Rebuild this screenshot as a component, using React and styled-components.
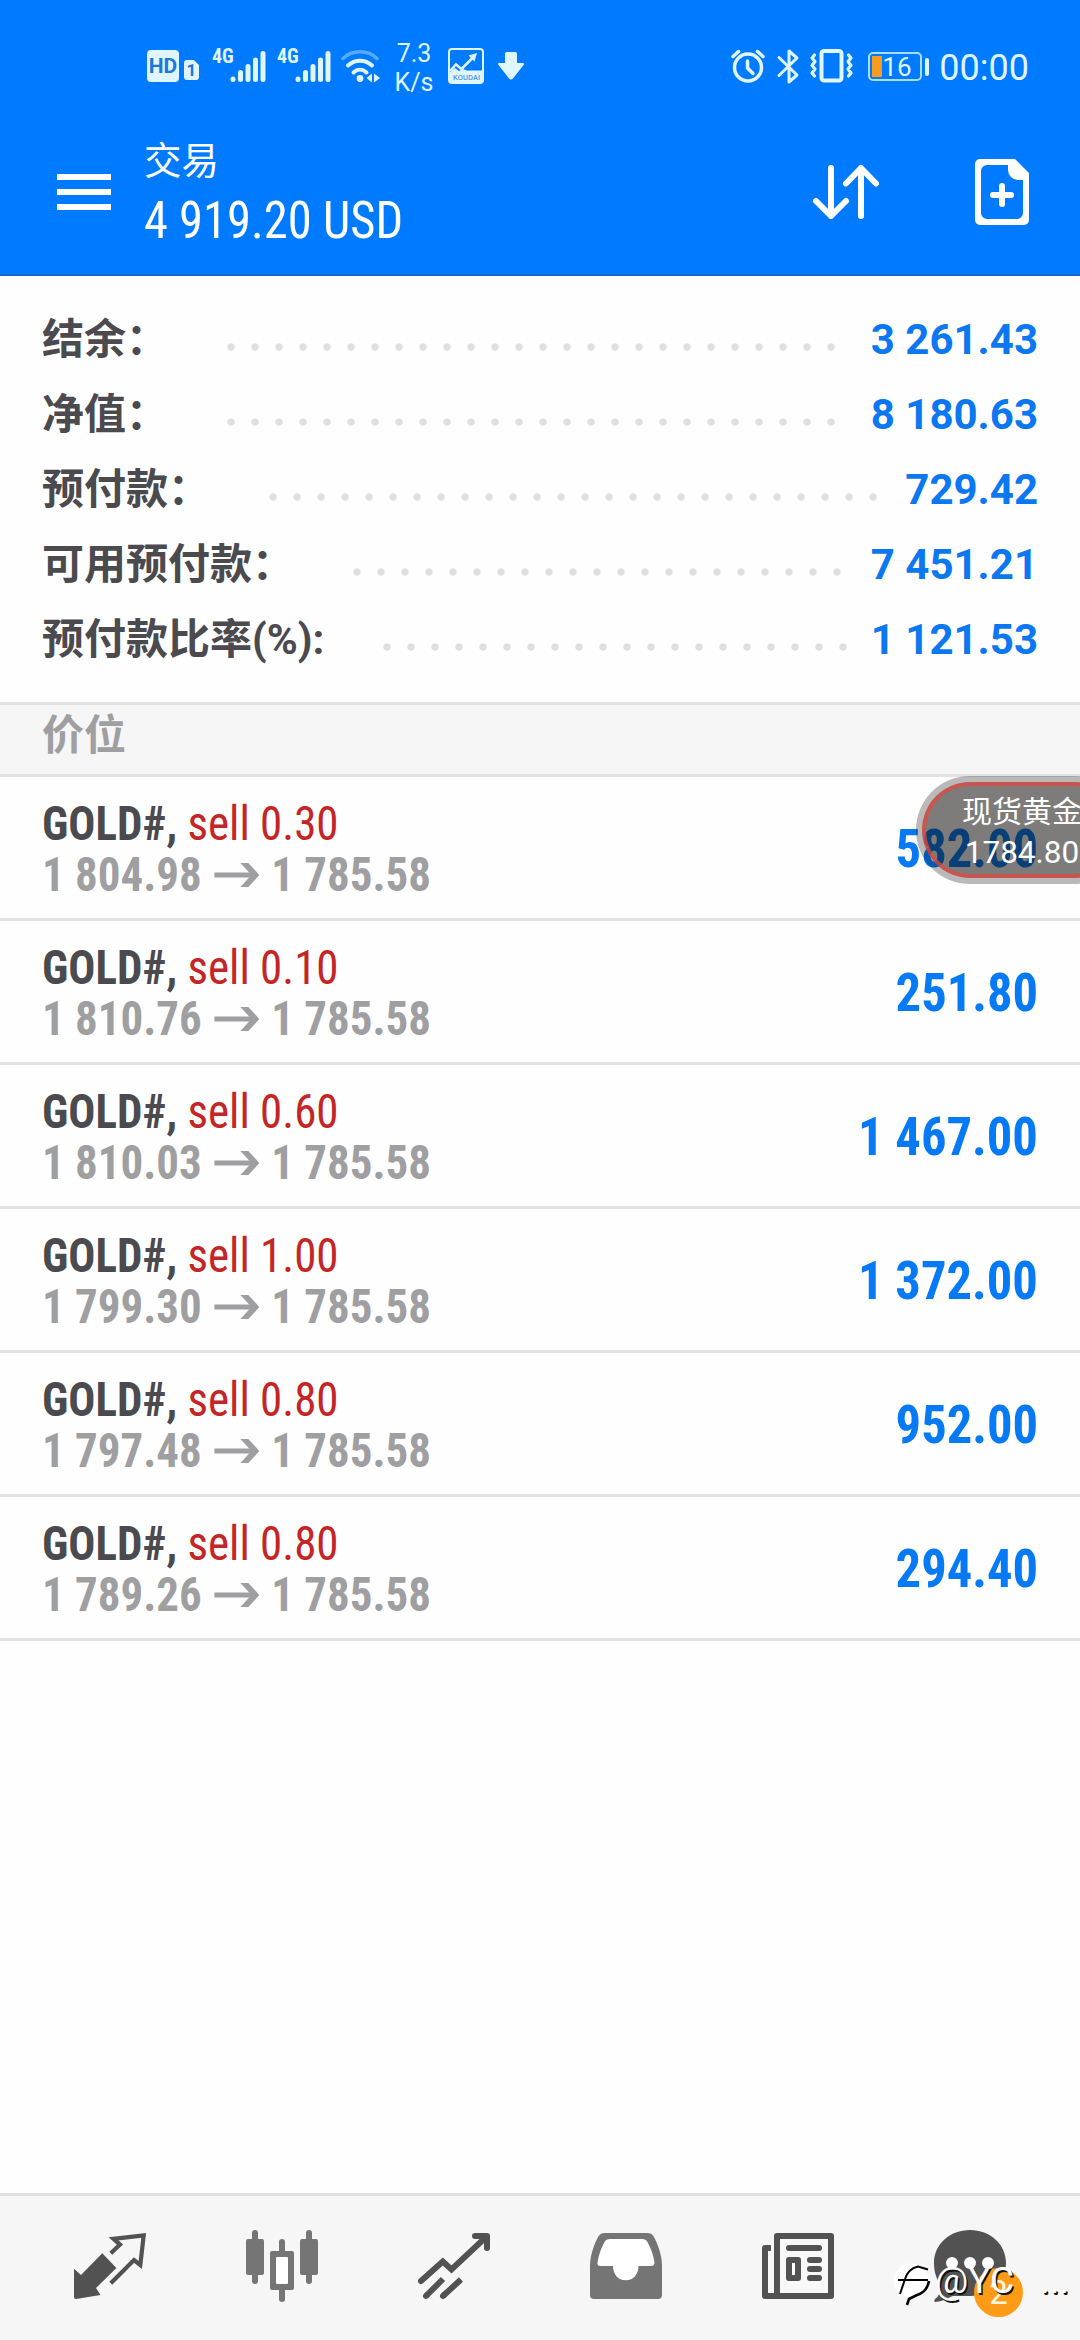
import styled, { createGlobalStyle } from 'styled-components';

const GlobalStyle = createGlobalStyle`
  body {
    margin: 0;
    background: #fff;
    font-family: Roboto, 'Noto Sans CJK SC', sans-serif;
  }
`;

const condensed = `
  font-family: 'Roboto Condensed', Roboto, 'Noto Sans CJK SC', sans-serif;
  font-stretch: 75%;
`;

const Screen = styled.div`
  position: relative;
  display: flex;
  flex-direction: column;
  width: 1080px;
  height: 2340px;
  overflow: hidden;
  background: #fefefe;
`;

const Header = styled.header`
  box-sizing: border-box;
  height: 276px;
  background: #007aff;
  border-bottom: 2px solid #1467c4;
`;

const StatusBar = styled.div`
  display: flex;
  align-items: center;
  justify-content: space-between;
  height: 132px;
  padding: 0 51px 0 147px;
  color: #dff6ff;
`;

const StatusGroup = styled.div`
  display: flex;
  align-items: center;
`;

const Icon = styled.svg`
  display: block;
  flex: none;
  overflow: visible;
  margin-left: ${props => props.$gap || 0}px;
`;

const HdBadge = styled.div`
  width: 32px;
  height: 32px;
  border-radius: 4px;
  background: #dff6ff;
  color: #1d78d8;
  font-size: 21px;
  font-weight: 700;
  line-height: 32px;
  text-align: center;
`;

const SimBadge = styled.div`
  width: 15px;
  height: 20px;
  margin: 8px 0 0 5px;
  border-radius: 3px;
  background: #dff6ff;
  clip-path: polygon(0 0, 65% 0, 100% 25%, 100% 100%, 0 100%);
  color: #1d78d8;
  font-size: 17px;
  font-weight: 700;
  line-height: 21px;
  text-align: center;
`;

const NetworkType = styled.span`
  ${condensed}
  width: 18px;
  margin: -20px 0 0 ${props => props.$gap}px;
  font-size: 20px;
  font-weight: 700;
  line-height: 20px;
`;

const Speed = styled.div`
  width: 40px;
  margin-left: 14px;
  font-size: 25px;
  line-height: 29px;
  text-align: center;
  padding-top: 3px;
`;

const Battery = styled.div`
  display: flex;
  align-items: center;
  margin-left: 15px;
  padding-top: 1px;

  &::after {
    content: '';
    width: 4px;
    height: 18px;
    margin-left: 3px;
    border-radius: 2px;
    background: #dff6ff;
  }
`;

const BatteryBody = styled.div`
  box-sizing: border-box;
  display: flex;
  align-items: center;
  width: 54px;
  height: 29px;
  padding-left: 2px;
  border: 2px solid #a9defa;
  border-radius: 5px;
  font-size: 26px;
  line-height: 26px;
`;

const BatteryFill = styled.div`
  width: 10px;
  height: 21px;
  background: #f79c1e;
`;

const Clock = styled.span`
  margin-left: 10px;
  padding-top: 3px;
  font-size: 36px;
  line-height: 40px;
`;

const TitleBar = styled.div`
  display: flex;
  align-items: flex-start;
  height: 142px;
  padding: 0 51px 0 57px;
  color: #fff;
`;

const MenuButton = styled.div`
  display: flex;
  flex-direction: column;
  gap: 9px;
  width: 54px;
  margin-top: 42px;
`;

const MenuLine = styled.span`
  height: 6px;
  background: #fff;
`;

const Titles = styled.div`
  flex: 1;
  margin-left: 33px;
`;

const Title = styled.div`
  padding-top: 5px;
  font-size: 37.5px;
  line-height: 48px;
`;

const Total = styled.div`
  ${condensed}
  margin-top: 4px;
  font-size: 52px;
  line-height: 64px;
  transform: scaleX(0.934);
  transform-origin: left;
`;

const HeaderActions = styled.div`
  display: flex;
  align-items: center;
  gap: 96px;
  margin-top: 27px;
`;

const Summary = styled.section`
  display: flex;
  flex-direction: column;
  height: 426px;
  box-sizing: border-box;
  padding: 26px 42px 0;
`;

const SummaryRow = styled.div`
  display: flex;
  align-items: center;
  height: 75px;
  font-size: 42px;
  font-weight: 700;
  line-height: 75px;
`;

const SummaryLabel = styled.span`
  color: #4b4a4f;
`;

const Dots = styled.span`
  width: ${props => props.$count * 24}px;
  height: 8px;
  margin: 14px 0 0 51px;
  background: radial-gradient(circle at 12px 4px, #dfdfdf 3.2px, transparent 4.2px) 0 0 / 24px 8px repeat-x;
`;

const SummaryValue = styled.span`
  margin-left: auto;
  color: #0b77f0;
`;

const SectionTitle = styled.div`
  box-sizing: border-box;
  height: 75px;
  padding-left: 42px;
  border-top: 3px solid #e2e2e3;
  border-bottom: 3px solid #e2e2e3;
  background: #f6f6f6;
  color: #9f9fa2;
  font-size: 42px;
  font-weight: 700;
  line-height: 61px;
`;

const PositionRow = styled.div`
  box-sizing: border-box;
  display: flex;
  align-items: center;
  justify-content: space-between;
  height: 144px;
  padding: 0 42px;
  border-bottom: 3px solid #e2e2e3;
`;

const PositionInfo = styled.div`
  ${condensed}
  font-size: 48px;
  line-height: 51px;
  padding-top: 3px;
  transform: scaleX(0.937);
  transform-origin: left;
`;

const Symbol = styled.div`
  color: #4b4a4f;
  font-weight: 700;
`;

const Side = styled.span`
  color: #c42527;
  font-weight: 400;
`;

const Prices = styled.div`
  display: flex;
  align-items: center;
  gap: 13px;
  color: #9f9fa2;
  font-weight: 700;
`;

const Profit = styled.div`
  ${condensed}
  padding-top: 2px;
  color: #067af5;
  font-size: 54px;
  font-weight: 700;
  transform: scaleX(0.937);
  transform-origin: right;
`;

const BottomBar = styled.nav`
  box-sizing: border-box;
  display: flex;
  align-items: flex-start;
  gap: 100px;
  height: 147px;
  margin-top: auto;
  padding: 34px 74px 0;
  border-top: 3px solid #e0e0e0;
  background: #f6f6f6;
`;

const ChatTab = styled.div`
  position: relative;
`;

const Badge = styled.span`
  position: absolute;
  left: 40px;
  top: 38px;
  width: 49px;
  height: 49px;
  border-radius: 50%;
  background: #ff9b17;
  color: #fff6dc;
  font-size: 33px;
  line-height: 50px;
  text-align: center;
`;

const FloatingQuote = styled.div`
  position: absolute;
  top: 776px;
  left: 916px;
  box-sizing: border-box;
  width: 212px;
  height: 108px;
  padding: 6px;
  border-radius: 54px;
  background: rgba(0, 0, 0, 0.27);
`;

const QuoteBody = styled.div`
  box-sizing: border-box;
  height: 96px;
  border: 4px solid rgba(226, 72, 66, 0.75);
  border-radius: 48px;
  background: rgba(20, 16, 14, 0.36);
  color: #fff;
  font-size: 30px;
  line-height: 41px;
  text-align: center;
  white-space: nowrap;
  padding-top: 5px;
`;

const QuotePrice = styled.div`
  font-size: 31.5px;
`;

const Watermark = styled.div`
  position: absolute;
  left: 893px;
  top: 2256px;
  display: flex;
  align-items: flex-start;
  color: #fff;
  font-size: 37px;
  line-height: 50px;
  text-shadow: 1.5px 1.5px 0 #111;
`;

const WatermarkName = styled.span`
  margin-left: 5px;
`;

const WatermarkMore = styled.span`
  margin-left: 26px;
`;

const summary = [
  { label: '结余：', value: '3 261.43', dots: 26 },
  { label: '净值：', value: '8 180.63', dots: 26 },
  { label: '预付款：', value: '729.42', dots: 26 },
  { label: '可用预付款：', value: '7 451.21', dots: 21 },
  { label: '预付款比率(%):', value: '1 121.53', dots: 20 },
];

const positions = [
  { id: 1, volume: '0.30', open: '1 804.98', profit: '582.00' },
  { id: 2, volume: '0.10', open: '1 810.76', profit: '251.80' },
  { id: 3, volume: '0.60', open: '1 810.03', profit: '1 467.00' },
  { id: 4, volume: '1.00', open: '1 799.30', profit: '1 372.00' },
  { id: 5, volume: '0.80', open: '1 797.48', profit: '952.00' },
  { id: 6, volume: '0.80', open: '1 789.26', profit: '294.40' },
];

const currentPrice = '1 785.58';

const SignalIcon = () => (
  <Icon width="36" height="34" viewBox="0 0 36 34" stroke="currentColor" strokeWidth="5" strokeLinecap="round">
    <path d="M3 30v.5M10.500 23.500v7M18 17.500v13M25.500 11v19.500M33 4.500v26" />
  </Icon>
);

const WifiIcon = () => (
  <Icon $gap={10} width="39" height="33" viewBox="0 0 39 33" fill="none" stroke="currentColor" strokeLinecap="round">
    <path d="M2 8.500C11 -.5 27 -.5 36 8.500" strokeWidth="3.500" opacity=".4" />
    <path d="M7 15.500c7-6.500 17-6.500 24 0" strokeWidth="4" />
    <path d="M12.500 22.500c4-3.800 9-3.800 13 0" strokeWidth="4" />
    <circle cx="19" cy="28.500" r="3.400" fill="currentColor" stroke="none" />
    <path d="M31 23.500v9l-5.500-4.500zM33 23.500v9l6-4.500z" fill="currentColor" stroke="none" />
  </Icon>
);

const ChartAppIcon = () => (
  <Icon $gap={14} width="36" height="36" viewBox="0 0 36 36">
    <rect x="1" y="1" width="34" height="34" rx="3" fill="none" stroke="currentColor" strokeWidth="2" />
    <path d="M1 25l6-5 4 3 4-2 4 1.500h16V35H1z" fill="currentColor" />
    <path d="M2 23l6-6.500 5.500 4.500L25 9.500" fill="none" stroke="currentColor" strokeWidth="2.500" />
    <path d="M20.500 7.500L29 5l-2.500 8.500z" fill="currentColor" />
    <text x="18.500" y="32" fontSize="7.500" textAnchor="middle" fill="#1d78d8" textLength="27">KOUDAI</text>
  </Icon>
);

const DownloadIcon = () => (
  <Icon $gap={14} width="26" height="28" viewBox="0 0 26 28">
    <path d="M7 1.500Q7 0 8.500 0h9Q19 0 19 1.500V11h5.500q2.500 0 1 2L15 26.500q-2 2-4 0L.5 13q-1.500-2 1-2H7z" fill="currentColor" />
  </Icon>
);

const AlarmIcon = () => (
  <Icon width="34" height="34" viewBox="0 0 34 34" fill="none" stroke="currentColor" strokeLinecap="round">
    <circle cx="17" cy="18.500" r="13.500" strokeWidth="3.500" />
    <path d="M16.500 12v7l5.500 5.500" strokeWidth="3.500" />
    <path d="M2 7.500L7.500 2.500M26.500 2.500l5.500 5" strokeWidth="3.500" />
  </Icon>
);

const BluetoothIcon = () => (
  <Icon $gap={12} width="22" height="35" viewBox="0 0 22 35" fill="none" stroke="currentColor" strokeWidth="3" strokeLinejoin="round" strokeLinecap="round">
    <path d="M2 8.500L20 26l-8 7V2l8 7L2 26.500" />
  </Icon>
);

const VibrateIcon = () => (
  <Icon $gap={11} width="43" height="34" viewBox="0 0 43 34" fill="none" stroke="currentColor" strokeLinejoin="round" strokeLinecap="round">
    <rect x="11.500" y="2" width="20" height="29.500" rx="2.500" strokeWidth="4" />
    <path d="M4.500 6L2 9l3 3.500-3 4 3 3.500-3 4L4.500 27M38.500 6l2.500 3-3 3.500 3 4-3 3.500 3 4-2.500 3" strokeWidth="3.200" />
  </Icon>
);

const SortIcon = () => (
  <Icon width="66" height="54" viewBox="0 0 66 54" fill="none" stroke="currentColor" strokeWidth="6" strokeLinecap="round" strokeLinejoin="round">
    <path d="M18 3v48M3 36l15 15 15-15M48 51V3M33 18.500L48 3l15 15.500" />
  </Icon>
);

const NewOrderIcon = () => (
  <Icon width="54" height="66" viewBox="0 0 54 66">
    <path
      fillRule="evenodd"
      fill="currentColor"
      d="M5 0H40L54 14V61a5 5 0 0 1-5 5H5a5 5 0 0 1-5-5V5a5 5 0 0 1 5-5zM12 6a6 6 0 0 0-6 6V54a6 6 0 0 0 6 6H42a6 6 0 0 0 6-6V21H43A10 10 0 0 1 33 11V6z"
    />
    <path d="M27 27v18M18 36h18" stroke="currentColor" strokeWidth="6" strokeLinecap="round" />
  </Icon>
);

const PriceArrow = () => (
  <Icon width="48" height="26" viewBox="0 0 45 26" preserveAspectRatio="none">
    <path d="M0 13H40" stroke="currentColor" strokeWidth="5" />
    <path d="M26 1h8L45 13 34 25h-8L37 13z" fill="currentColor" />
  </Icon>
);

const QuotesIcon = () => (
  <Icon width="72" height="72" viewBox="0 0 72 72">
    <path d="M0 38.700L7 45 28.300 23.300 42.400 38 22 58l4.500 7L2 69Q0 69 0 67z" fill="#525252" />
    <path d="M36.800 23.200L46 14.600 39.500 8.800 69.700 5.300 66.300 35 60 30 36.800 53.300" fill="none" stroke="#525252" strokeWidth="4.200" />
  </Icon>
);

const ChartsIcon = () => (
  <Icon width="72" height="72" viewBox="0 0 72 72" fill="#757575">
    <rect y="9" width="18" height="36" rx="2" />
    <rect x="6" width="6" height="54" rx="3" />
    <rect x="54" y="9" width="18" height="36" rx="2" />
    <rect x="60" width="6" height="54" rx="3" />
    <rect x="33" y="9" width="6" height="63" rx="3" />
    <rect x="24" y="21" width="24" height="39" rx="2" />
    <rect x="30" y="27" width="12" height="27" rx="1" fill="#fff" />
  </Icon>
);

const TradeIcon = () => (
  <Icon width="72" height="72" viewBox="0 0 72 72" fill="none" stroke="#525252" strokeWidth="6" strokeLinecap="round">
    <path d="M3 51L24.800 31.500 33.500 39.500 67 8" strokeLinejoin="miter" />
    <path d="M57 6h12v12" strokeLinejoin="round" />
    <path d="M60 6l9 9V6z" fill="#525252" stroke="none" />
    <path d="M8 66L25 49M25 66L43 49.500" strokeLinecap="butt" />
    <path d="M8 66l1-1M25 66l1-1" />
  </Icon>
);

const HistoryIcon = () => (
  <Icon width="72" height="72" viewBox="0 0 72 72">
    <path d="M14.500 3h43C62 3 63.500 6 65 9c4.500 9 7 19 7 27v29a4 4 0 0 1-4 4H4a4 4 0 0 1-4-4V36C0 28 2.500 18 7 9c1.500-3 3-6 7.500-6z" fill="#757575" />
    <path d="M20 9h32q4 0 5.500 3Q63 22 64.500 32.500 64.500 36 61 36H48.500c0 8-5 14.300-12.700 14.300S23 44 23 36H10.500Q7 36 7.500 32.500 9 22 14.500 12 16 9 20 9z" fill="#fff" />
  </Icon>
);

const NewsIcon = () => (
  <Icon width="72" height="72" viewBox="0 0 72 72" fill="none" stroke="#525252" strokeWidth="6">
    <rect x="15" y="6" width="54" height="60" fill="#f8f8f8" strokeLinejoin="round" />
    <path d="M9 18H3V66H15" strokeLinejoin="round" />
    <path d="M27 18h30M48 30h9M48 39h9M48 48h9" strokeLinecap="round" />
    <rect x="27" y="30" width="9" height="18" fill="#fff" strokeLinejoin="round" />
  </Icon>
);

const ChatIcon = () => (
  <Icon width="72" height="72" viewBox="0 0 72 72">
    <path d="M36 0c20 0 36 14 36 33S56 66 36 66H19C12 69 6 72 1 72q-1.500-1 0-3 6-4 6-14C2 49 0 41 0 33 0 14 16 0 36 0z" fill="#525252" />
    <circle cx="18" cy="33" r="6" fill="#fff" />
    <circle cx="36" cy="33" r="6" fill="#fff" />
    <circle cx="54" cy="33" r="6" fill="#fff" />
  </Icon>
);

const WatermarkLogo = () => (
  <Icon width="37" height="50" viewBox="0 -6 37 50" fill="none">
    <circle cx="18" cy="19" r="17.500" fill="#fff" />
    <path d="M35 7.500L25 4.500Q15 7 12 17L7 32M5 18H35" stroke="#000" strokeWidth="2" />
    <path d="M36 19Q34 30 24 33L16 37 14 43" stroke="#000" strokeWidth="2.600" />
  </Icon>
);

const App = () => {
  return (
    <Screen>
      <GlobalStyle />
      <Header>
        <StatusBar>
          <StatusGroup>
            <HdBadge>HD</HdBadge>
            <SimBadge>1</SimBadge>
            <NetworkType $gap={13}>4G</NetworkType>
            <SignalIcon />
            <NetworkType $gap={11}>4G</NetworkType>
            <SignalIcon />
            <WifiIcon />
            <Speed>
              7.3
              <br />
              K/s
            </Speed>
            <ChartAppIcon />
            <DownloadIcon />
          </StatusGroup>
          <StatusGroup>
            <AlarmIcon />
            <BluetoothIcon />
            <VibrateIcon />
            <Battery>
              <BatteryBody>
                <BatteryFill />
                16
              </BatteryBody>
            </Battery>
            <Clock>00:00</Clock>
          </StatusGroup>
        </StatusBar>
        <TitleBar>
          <MenuButton>
            <MenuLine />
            <MenuLine />
            <MenuLine />
          </MenuButton>
          <Titles>
            <Title>交易</Title>
            <Total>4 919.20 USD</Total>
          </Titles>
          <HeaderActions>
            <SortIcon />
            <NewOrderIcon />
          </HeaderActions>
        </TitleBar>
      </Header>

      <Summary>
        {summary.map(item => (
          <SummaryRow key={item.label}>
            <SummaryLabel>{item.label}</SummaryLabel>
            <Dots $count={item.dots} />
            <SummaryValue>{item.value}</SummaryValue>
          </SummaryRow>
        ))}
      </Summary>

      <SectionTitle>价位</SectionTitle>
      {positions.map(position => (
        <PositionRow key={position.id}>
          <PositionInfo>
            <Symbol>
              GOLD#, <Side>sell {position.volume}</Side>
            </Symbol>
            <Prices>
              {position.open}
              <PriceArrow />
              {currentPrice}
            </Prices>
          </PositionInfo>
          <Profit>{position.profit}</Profit>
        </PositionRow>
      ))}

      <BottomBar>
        <QuotesIcon />
        <ChartsIcon />
        <TradeIcon />
        <HistoryIcon />
        <NewsIcon />
        <ChatTab>
          <ChatIcon />
          <Badge>2</Badge>
        </ChatTab>
      </BottomBar>

      <FloatingQuote>
        <QuoteBody>
          现货黄金
          <QuotePrice>1784.80</QuotePrice>
        </QuoteBody>
      </FloatingQuote>

      <Watermark>
        <WatermarkLogo />
        <WatermarkName>@YC</WatermarkName>
        <WatermarkMore>...</WatermarkMore>
      </Watermark>
    </Screen>
  );
};

export default App;
